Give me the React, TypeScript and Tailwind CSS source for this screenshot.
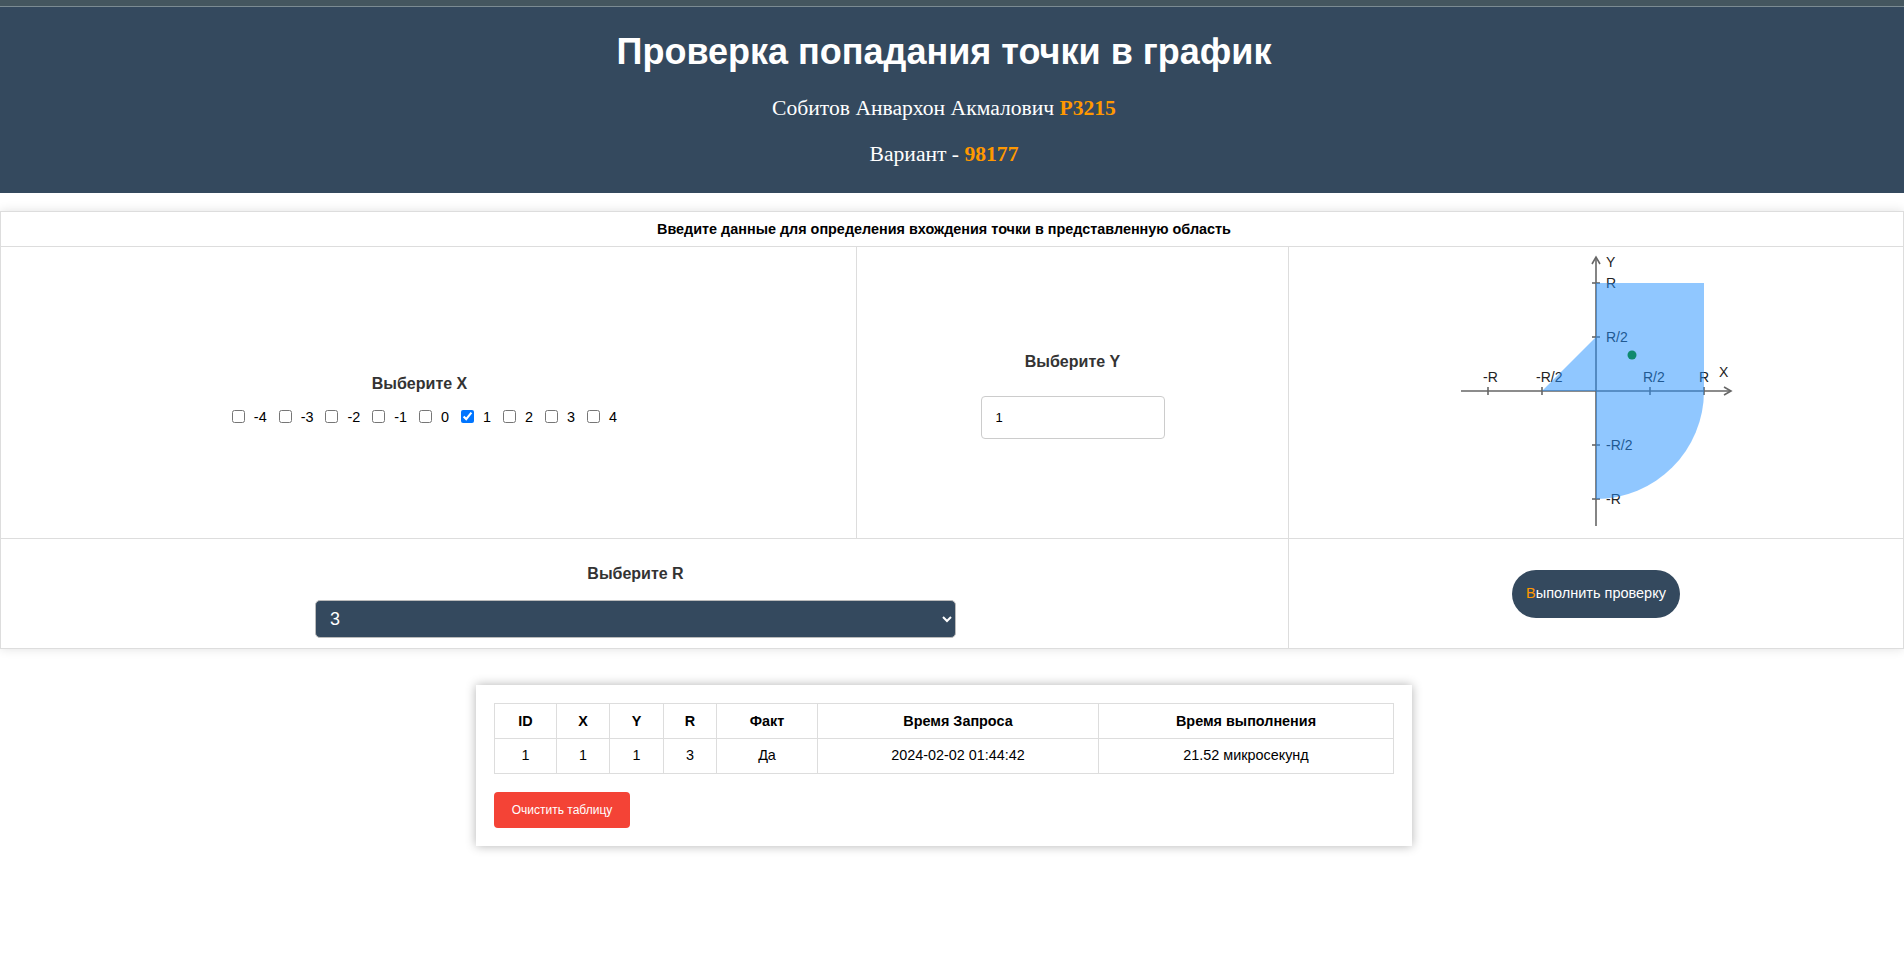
import React from "react";

const xs = [-4, -3, -2, -1, 0, 1, 2, 3, 4];

function Graph() {
  const ox = 150;
  const oy = 144;
  const R = 108;
  const h = R / 2;
  return (
    <svg width="300" height="290" viewBox="0 0 300 290" className="block">
      <g stroke="#666" strokeWidth="1.6" fill="none">
        <line x1={15} y1={oy} x2={285} y2={oy} />
        <polyline points={`278,${oy - 4} 285,${oy} 278,${oy + 4}`} />
        <line x1={ox} y1={10} x2={ox} y2={279} />
        <polyline points={`${ox - 4},17 ${ox},10 ${ox + 4},17`} />
        {[-R, -h, h, R].map((d) => (
          <line key={"tx" + d} x1={ox + d} y1={oy - 4} x2={ox + d} y2={oy + 4} />
        ))}
        {[-R, -h, h, R].map((d) => (
          <line key={"ty" + d} x1={ox - 4} y1={oy + d} x2={ox + 4} y2={oy + d} />
        ))}
      </g>
      <g fill="#222" fontFamily="'Liberation Sans', Arial, sans-serif" fontSize="14">
        <text x={37} y={135}>-R</text>
        <text x={90} y={135}>-R/2</text>
        <text x={197} y={135}>R/2</text>
        <text x={253} y={135}>R</text>
        <text x={273} y={130}>X</text>
        <text x={160} y={20}>Y</text>
        <text x={160} y={oy - R + 5}>R</text>
        <text x={160} y={oy - h + 5}>R/2</text>
        <text x={160} y={oy + h + 5}>-R/2</text>
        <text x={160} y={oy + R + 5}>-R</text>
      </g>
      <g fill="#2190ff" fillOpacity="0.5">
        <rect x={ox} y={oy - R} width={R} height={R} />
        <polygon points={`${ox - h},${oy} ${ox},${oy - h} ${ox},${oy}`} />
        <path d={`M${ox},${oy} L${ox + R},${oy} A${R},${R} 0 0 1 ${ox},${oy + R} Z`} />
      </g>
      <circle cx={ox + 36} cy={oy - 36} r={4.5} fill="#0f8a6e" />
    </svg>
  );
}

export default function App() {
  return (
    <div className="min-h-[976px] bg-white font-['Liberation_Sans',Arial,sans-serif] text-black">
      <header className="bg-[#34495e] h-[193px] flex flex-col items-center">
        <div className="w-full h-[6px] bg-[#44565f]" />
        <div className="w-full h-[1px] bg-[#7b8b92]" />
        <div className="w-full pr-[16px] flex flex-col items-center">
          <h1 className="mt-[24px] text-[36px] leading-[42px] font-bold text-white">
            Проверка попадания точки в график
          </h1>
          <p className="mt-[23px] text-[21.6px] leading-[24px] text-white font-['Liberation_Serif','Times_New_Roman',serif]">
            Собитов Анвархон Акмалович <b className="text-[#ff9800]">P3215</b>
          </p>
          <p className="mt-[22px] text-[21.6px] leading-[24px] text-white font-['Liberation_Serif','Times_New_Roman',serif]">
            Вариант - <b className="text-[#ff9800]">98177</b>
          </p>
        </div>
      </header>

      <div className="mt-[18px] border border-[#dddddd] shadow-[0_0_10px_rgba(0,0,0,0.12)] grid grid-cols-[856px_432px_1fr]">
        <div className="col-span-3 h-[35px] border-b border-[#dddddd] pr-[16px] pt-[1px] flex items-center justify-center text-[14.4px] font-bold">
          Введите данные для определения вхождения точки в представленную область
        </div>

        <div className="h-[292px] border-b border-r border-[#dddddd] pt-[13px] flex flex-col items-center justify-center">
          <div className="text-[16px] leading-[18px] font-bold text-[#333] mr-[18px]">Выберите X</div>
          <div className="mt-[17px] mr-[8px] flex items-center h-[13px] text-[14.4px] leading-[16px]">
            {xs.map((x, i) => (
              <label key={x} className={"flex items-center " + (i < xs.length - 1 ? "mr-[12px]" : "")}>
                <input
                  type="checkbox"
                  defaultChecked={x === 1}
                  className="w-[13px] h-[13px] m-0 accent-[#0075ff]"
                />
                <span className="ml-[9px]">{x}</span>
              </label>
            ))}
          </div>
        </div>

        <div className="h-[292px] border-b border-r border-[#dddddd] pt-[7px] flex flex-col items-center justify-center">
          <div className="text-[16px] leading-[18px] font-bold text-[#333]">Выберите Y</div>
          <input
            type="text"
            defaultValue="1"
            className="mt-[25px] w-[184px] h-[43px] border border-[#cccccc] rounded-[4px] pl-[14px] text-[13px] text-black outline-none"
          />
        </div>

        <div className="h-[292px] border-b border-[#dddddd] flex justify-center">
          <Graph />
        </div>

        <div className="col-span-2 h-[109px] border-r border-[#dddddd] pt-[16px] pr-[18px] flex flex-col items-center justify-center">
          <div className="text-[16px] leading-[18px] font-bold text-[#333]">Выберите R</div>
          <select
            defaultValue="3"
            className="mt-[17px] w-[641px] h-[38px] rounded-[5px] border border-[#bbbbbb] bg-[#34495e] text-white text-[18px] pl-[10px] pr-[6px]"
          >
            <option value="1">1</option>
            <option value="1.5">1.5</option>
            <option value="2">2</option>
            <option value="2.5">2.5</option>
            <option value="3">3</option>
          </select>
        </div>

        <div className="h-[109px] flex items-center justify-center">
          <button className="w-[168px] h-[48px] rounded-full bg-[#34495e] text-white text-[14.5px]">
            <span className="text-[#ff9800]">В</span>ыполнить проверку
          </button>
        </div>
      </div>

      <div className="mt-[36px] ml-[476px] w-[936px] p-[18px] bg-white shadow-[0_0_10px_rgba(0,0,0,0.3)]">
        <table className="w-[899px] table-fixed border-collapse text-[14.4px] text-center">
          <colgroup>
            <col className="w-[62px]" />
            <col className="w-[53px]" />
            <col className="w-[54px]" />
            <col className="w-[53px]" />
            <col className="w-[101px]" />
            <col className="w-[281px]" />
            <col className="w-[295px]" />
          </colgroup>
          <thead>
            <tr className="h-[35px]">
              {["ID", "X", "Y", "R", "Факт", "Время Запроса", "Время выполнения"].map((t) => (
                <th key={t} className="border border-[#dddddd] font-bold p-0 pt-[1px]">{t}</th>
              ))}
            </tr>
          </thead>
          <tbody>
            <tr className="h-[35px]">
              {["1", "1", "1", "3", "Да", "2024-02-02 01:44:42", "21.52 микросекунд"].map((t, i) => (
                <td key={i} className="border border-[#dddddd] p-0">{t}</td>
              ))}
            </tr>
          </tbody>
        </table>
        <button className="mt-[18px] w-[136px] h-[36px] rounded-[4px] bg-[#f44336] text-white text-[12px]">
          Очистить таблицу
        </button>
      </div>
    </div>
  );
}
